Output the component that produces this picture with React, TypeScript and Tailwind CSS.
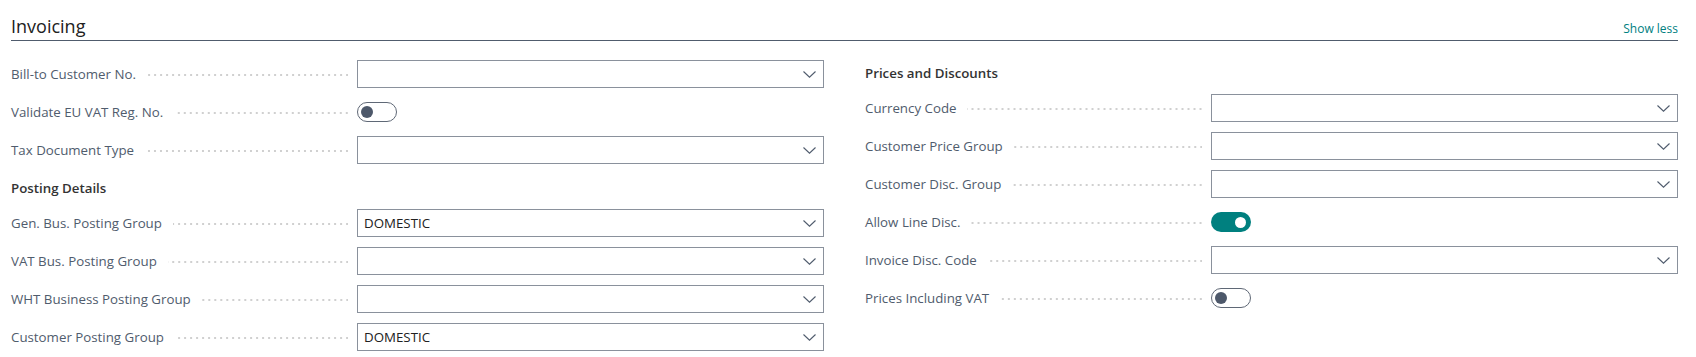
import React from "react";

const FONT = { fontFamily: '"Open Sans", "Noto Sans", Arial, sans-serif' };

function Chevron() {
  return (
    <svg width="13" height="7" viewBox="0 0 13 7" className="shrink-0">
      <path d="M0.5 0.5 L6.5 6.2 L12.5 0.5" fill="none" stroke="#505c6d" strokeWidth="1.1" />
    </svg>
  );
}

function Label({ text }: { text: string }) {
  return (
    <div className="flex items-center h-[28px] pr-[9px]">
      <span className="text-[13.3px] text-[#505c6d] whitespace-nowrap leading-[18px]">{text}</span>
      <div className="flex-1 ml-[11px] mt-[2px] h-[2px] bg-[linear-gradient(to_left,#d0d0d0_2px,transparent_2px)] bg-[length:6px_2px] bg-repeat-x bg-right" />
    </div>
  );
}

function SelectRow({ label, value }: { label: string; value?: string }) {
  return (
    <div className="grid grid-cols-[346px_1fr] h-[28px]">
      <Label text={label} />
      <div className="flex items-center justify-between h-[28px] border border-[#8a919c] bg-white pl-[6px] pr-[7px]">
        <span className="text-[13.3px] text-[#212121] leading-[18px]">{value ?? ""}</span>
        <Chevron />
      </div>
    </div>
  );
}

function ToggleRow({ label, on }: { label: string; on?: boolean }) {
  return (
    <div className="grid grid-cols-[346px_1fr] h-[28px]">
      <Label text={label} />
      <div className="flex items-center">
        {on ? (
          <div className="w-[40px] h-[20px] rounded-full bg-[#00807f] flex items-center justify-end pr-[5px]">
            <div className="w-[11px] h-[11px] rounded-full bg-white" />
          </div>
        ) : (
          <div className="w-[40px] h-[20px] rounded-full border border-[#5f6876] flex items-center pl-[3px]">
            <div className="w-[12px] h-[12px] rounded-full bg-[#4d586a]" />
          </div>
        )}
      </div>
    </div>
  );
}

function Group({ title, h }: { title: string; h: "a" | "b" }) {
  return (
    <div className={h === "a" ? "h-[25px] flex items-end pb-[2px]" : "h-[24px] flex items-end pb-[2px]"}>
      <span className="text-[13.3px] font-semibold text-[#333333] leading-[18px]">{title}</span>
    </div>
  );
}

export default function App() {
  return (
    <div style={FONT} className="w-[1696px] h-[357px] bg-white pl-[11px] pr-[18px] overflow-hidden">
      <div className="flex justify-between items-baseline pt-[14px] pb-[2px] border-b border-[#505c6d]">
        <span className="text-[18px] leading-[24px] text-[#212121]">Invoicing</span>
        <span className="text-[12px] leading-[16px] text-[#00807f]">Show less</span>
      </div>
      <div className="grid grid-cols-2 gap-x-[41px] mt-[19px]">
        <div className="flex flex-col gap-[10px]">
          <SelectRow label="Bill-to Customer No." />
          <ToggleRow label="Validate EU VAT Reg. No." />
          <SelectRow label="Tax Document Type" />
          <Group title="Posting Details" h="a" />
          <SelectRow label="Gen. Bus. Posting Group" value="DOMESTIC" />
          <SelectRow label="VAT Bus. Posting Group" />
          <SelectRow label="WHT Business Posting Group" />
          <SelectRow label="Customer Posting Group" value="DOMESTIC" />
        </div>
        <div className="flex flex-col gap-[10px]">
          <Group title="Prices and Discounts" h="b" />
          <SelectRow label="Currency Code" />
          <SelectRow label="Customer Price Group" />
          <SelectRow label="Customer Disc. Group" />
          <ToggleRow label="Allow Line Disc." on />
          <SelectRow label="Invoice Disc. Code" />
          <ToggleRow label="Prices Including VAT" />
        </div>
      </div>
    </div>
  );
}
